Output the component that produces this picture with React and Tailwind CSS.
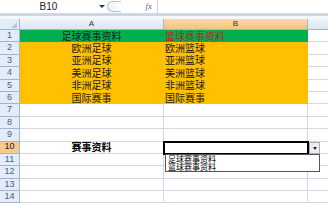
import React from "react";

const cjk = { fontFamily: '"Noto Sans CJK SC", "Liberation Sans", sans-serif' };

const rows = [
  { n: 1, a: "足球赛事资料", b: "篮球赛事资料", fill: "green" },
  { n: 2, a: "欧洲足球", b: "欧洲篮球", fill: "orange" },
  { n: 3, a: "亚洲足球", b: "亚洲篮球", fill: "orange" },
  { n: 4, a: "美洲足球", b: "美洲篮球", fill: "orange" },
  { n: 5, a: "非洲足球", b: "非洲篮球", fill: "orange" },
  { n: 6, a: "国际赛事", b: "国际赛事", fill: "orange" },
  { n: 7, a: "", b: "" },
  { n: 8, a: "", b: "" },
  { n: 9, a: "", b: "" },
  { n: 10, a: "赛事资料", b: "", bold: true, active: true },
  { n: 11, a: "", b: "" },
  { n: 12, a: "", b: "" },
  { n: 13, a: "", b: "" },
  { n: 14, a: "", b: "" },
];

function Row({ r }) {
  const fillA =
    r.fill === "green" ? "bg-[#00b050]" : r.fill === "orange" ? "bg-[#ffc000]" : "bg-white";
  const grid =
    r.fill === "green"
      ? "border-[#00b050]"
      : r.fill === "orange"
      ? "border-[#ffc000]"
      : "border-[#d0d7e5]";
  return (
    <div className="flex h-[12.4px]">
      {/* row number */}
      <div
        className={`w-[20px] shrink-0 flex items-center justify-center text-[9px] border-r border-b border-[#9eb6ce] ${
          r.active ? "bg-[#f8c98a] text-[#222]" : "bg-[#e4ecf7] text-[#46618a]"
        }`}
        style={{ fontFamily: '"Liberation Sans", sans-serif' }}
      >
        {r.n}
      </div>
      {/* column A */}
      <div
        className={`w-[144px] shrink-0 flex items-center justify-center text-[10px] leading-none border-r border-b ${fillA} ${grid} ${
          r.bold ? "font-semibold text-black" : "text-[#1a1a1a]"
        }`}
        style={cjk}
      >
        {r.a}
      </div>
      {/* column B */}
      <div
        className={`w-[144px] shrink-0 flex items-center pl-[1px] text-[10px] leading-none border-r border-b ${fillA} ${grid} ${
          r.fill === "green" ? "text-[#b3261e]" : "text-[#1a1a1a]"
        }`}
        style={cjk}
      >
        {r.b}
      </div>
      {/* column C */}
      <div className="flex-1 bg-white border-b border-[#d0d7e5]" />
    </div>
  );
}

export default function App() {
  return (
    <div className="relative w-[328px] h-[204px] overflow-hidden bg-white">
      {/* FORMULA BAR */}
      <div className="flex h-[13px] bg-white">
        <div
          className="w-[97px] flex items-center justify-center text-[10px] text-[#222]"
          style={{ fontFamily: '"Liberation Sans", sans-serif' }}
        >
          B10
        </div>
        <div className="w-[10px] flex items-center justify-center">
          <div className="w-0 h-0 border-l-[3px] border-r-[3px] border-t-[3px] border-l-transparent border-r-transparent border-t-[#333]" />
        </div>
        <div className="w-[16px] flex items-center">
          <div className="w-[14px] h-[11px] rounded-l-full border-l border-t border-b border-[#b8c2cf] bg-gradient-to-r from-[#eef1f5] to-white" />
        </div>
        <div className="w-[34px] flex items-center justify-end pr-[5px]">
          <span
            className="italic text-[9px] text-[#666]"
            style={{ fontFamily: '"Liberation Serif", serif' }}
          >
            fx
          </span>
        </div>
        <div className="flex-1 border-l border-[#c9d2de] bg-white" />
      </div>
      <div className="h-[3px] bg-[#cdd7e4]" />
      <div className="h-[3px] bg-[#f4f7fb]" />

      {/* COLUMN HEADERS */}
      <div
        className="flex h-[11px] text-[8px] text-[#333]"
        style={{ fontFamily: '"Liberation Sans", sans-serif' }}
      >
        <div className="relative w-[20px] shrink-0 bg-[#e4ecf7] border-r border-b border-[#9eb6ce]">
          <div className="absolute right-[2px] bottom-[1px] w-0 h-0 border-l-[6px] border-t-[6px] border-l-transparent border-t-transparent border-b-0 border-r-0"
            style={{ borderBottom: "6px solid #b7c6d9", borderLeft: "6px solid transparent", borderTop: 0 }}
          />
        </div>
        <div className="w-[144px] shrink-0 flex items-center justify-center bg-gradient-to-b from-[#eef3fa] to-[#dde6f2] border-r border-b border-[#9eb6ce]">
          A
        </div>
        <div className="w-[144px] shrink-0 flex items-center justify-center bg-gradient-to-b from-[#fbd9a8] to-[#f7c27e] border-r border-b border-[#9eb6ce]">
          B
        </div>
        <div className="flex-1 bg-gradient-to-b from-[#eef3fa] to-[#dde6f2] border-b border-[#9eb6ce]" />
      </div>

      {/* ROWS */}
      <div className="flex flex-col">
        {rows.map((r) => (
          <Row key={r.n} r={r} />
        ))}
      </div>

      {/* ACTIVE CELL B10 */}
      <div className="absolute left-[163px] top-[141px] w-[146px] h-[14px] border-2 border-black" />

      {/* DROPDOWN BUTTON */}
      <div className="absolute left-[309px] top-[142px] w-[11px] h-[12px] bg-[#eceef1] border border-[#a5abb3] flex items-center justify-center">
        <div className="w-0 h-0 border-l-[2.5px] border-r-[2.5px] border-t-[3px] border-l-transparent border-r-transparent border-t-[#222]" />
      </div>

      {/* DROPDOWN LIST */}
      <div
        className="absolute left-[165px] top-[154px] w-[155px] h-[18px] bg-white border border-[#555] flex flex-col pl-[2px] text-[8px] leading-[8px] text-black"
        style={cjk}
      >
        <div>足球赛事资料</div>
        <div>篮球赛事资料</div>
      </div>
    </div>
  );
}
